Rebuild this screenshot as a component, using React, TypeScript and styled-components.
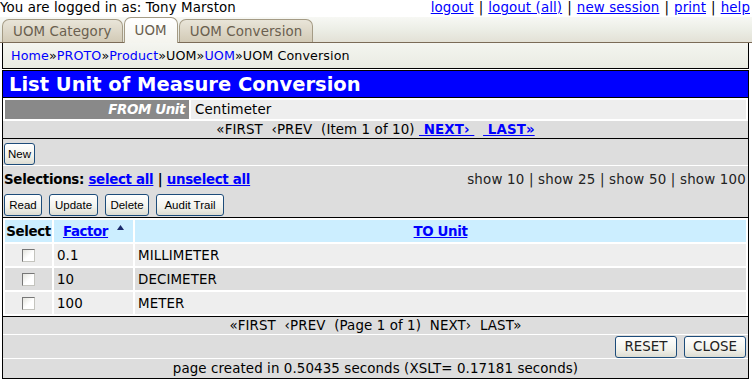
import React from 'react';
import styled, {createGlobalStyle} from 'styled-components';

const GlobalStyle = createGlobalStyle`
  body {
    margin: 0;
    background: #fff;
    font-family: "DejaVu Sans", Verdana, sans-serif;
    font-size: 13.4px;
    letter-spacing: 0.1px;
    color: #000;
  }
  a {
    color: #0000ff;
  }
  th {
    letter-spacing: -0.4px;
  }
`

const TopLine = styled.div`
  display: flex;
  justify-content: space-between;
  height: 17px;
  line-height: 16px;
  padding-right: 2px;
  white-space: pre;
`

const Sep = styled.span`
  padding: 0 5px;
`

const TabBar = styled.div`
  display: flex;
  align-items: flex-end;
  height: 25px;
  padding-left: 2px;
  background: linear-gradient(#f7f8f4, #eceee6 50%, #e3e1d6);
  border-bottom: 1px solid #7b6b57;
`

const Tab = styled.div<{ $active?: boolean }>`
  position: relative;
  display: flex;
  align-items: center;
  height: ${p => p.$active ? 25 : 22}px;
  margin-right: 1px;
  margin-bottom: ${p => p.$active ? -1 : 0}px;
  padding: 0 10px;
  border: 1px solid #a49b85;
  border-bottom: none;
  border-radius: 7px 7px 0 0;
  background: ${p => p.$active
    ? 'linear-gradient(#ffffff, #f4f4ee)'
    : 'linear-gradient(#e9e5d9, #d2cab6)'};
  color: #6a5f4f;
`

const Breadcrumb = styled.div`
  height: 25px;
  margin: 0 3px 0 2px;
  padding-left: 8px;
  display: flex;
  align-items: center;
  border: 1px solid #000;
  border-top: none;
  background: linear-gradient(#f4f5f0, #e9ebe2);
  font-size: 12.7px;
  letter-spacing: 0.1px;

  a {
    text-decoration: none;
  }
`

const Main = styled.div`
  margin: 1px 3px 0 2px;
  border: 1px solid #000;
`

const Title = styled.div`
  height: 26px;
  line-height: 27px;
  padding-left: 6px;
  background: #0000ff;
  color: #fff;
  font-weight: bold;
  font-size: 19.5px;
  letter-spacing: 0;
  border-bottom: 1px solid #000;
  white-space: nowrap;
`

const Grid = styled.table`
  width: 100%;
  border-spacing: 2px;
  font-size: 13.4px;
`

const Label = styled.td`
  width: 180px;
  height: 19px;
  padding: 0 4px 0 0;
  background: #898989;
  color: #fff;
  font-weight: bold;
  font-style: italic;
  letter-spacing: -0.4px;
  text-align: right;
`

const Value = styled.td`
  height: 19px;
  padding: 0 0 0 4px;
  background: #eeeeee;
`

const Pager = styled.div<{ $last?: boolean }>`
  height: 17px;
  line-height: 17px;
  text-align: center;
  background: #dddddd;
  white-space: pre;
  border-bottom: 1px solid ${p => p.$last ? '#000' : '#fff'};

  a {
    font-weight: bold;
  }
`

const Bar = styled.div<{ $h: number; $line?: string; $right?: boolean }>`
  height: ${p => p.$h}px;
  display: flex;
  align-items: center;
  justify-content: ${p => p.$right ? 'flex-end' : 'space-between'};
  gap: 7px;
  padding: 0 2px 0 1px;
  background: #dddddd;
  border-bottom: ${p => p.$line ? `1px solid ${p.$line}` : 'none'};
`

const Group = styled.div`
  display: flex;
  gap: 7px;
  align-items: center;
`

const SmallButton = styled.button<{ $w: number }>`
  width: ${p => p.$w}px;
  height: 22px;
  padding: 0;
  border: 1px solid #1d4c7a;
  border-radius: 3px;
  background: linear-gradient(#ffffff, #f2f2ec 60%, #dcdcd2);
  font-family: "Liberation Sans", Arial, sans-serif;
  font-size: 11.5px;
  letter-spacing: 0;
  color: #000;
`

const BigButton = styled.button`
  width: 62px;
  height: 22px;
  border: 1px solid #1d4c7a;
  border-radius: 3px;
  background: linear-gradient(#ffffff, #f2f2ec 60%, #dcdcd2);
  font-family: "DejaVu Sans", Verdana, sans-serif;
  font-size: 13.4px;
  color: #222;
`

const Selections = styled.div`
  font-weight: bold;
  letter-spacing: -0.3px;
`

const ShowLinks = styled.div`
  color: #222;
  white-space: pre;
  letter-spacing: 0.2px;
`

const Head = styled.th<{ $w?: number }>`
  height: 22px;
  width: ${p => p.$w ? `${p.$w}px` : 'auto'};
  padding: 0;
  background: #cceeff;
  text-align: center;
  white-space: nowrap;
`

const SortArrow = styled.svg`
  vertical-align: 6px;
  margin-left: 9px;
`

const Cell = styled.td<{ $alt?: boolean; $center?: boolean }>`
  height: 22px;
  padding: 0 0 0 3px;
  background: ${p => p.$alt ? '#dddddd' : '#eeeeee'};
  text-align: ${p => p.$center ? 'center' : 'left'};
`

const Check = styled.input`
  appearance: none;
  display: inline-block;
  width: 13px;
  height: 13px;
  margin: 4px 0 0 -3px;
  border: 1px solid;
  border-color: #767676 #c4c4be #c4c4be #767676;
  background: linear-gradient(135deg, #e4e4de, #ffffff 55%);
`

const Footer = styled.div`
  height: 19px;
  line-height: 19px;
  text-align: center;
  background: #dddddd;
`

const rows = [
  {factor: '0.1', unit: 'MILLIMETER'},
  {factor: '10', unit: 'DECIMETER'},
  {factor: '100', unit: 'METER'},
];

export default function App() {
  return (
    <>
      <GlobalStyle/>
      <TopLine>
        <span>You are logged in as: Tony Marston</span>
        <span>
          <a href="#">logout</a><Sep>|</Sep>
          <a href="#">logout (all)</a><Sep>|</Sep>
          <a href="#">new session</a><Sep>|</Sep>
          <a href="#">print</a><Sep>|</Sep>
          <a href="#">help</a>
        </span>
      </TopLine>
      <TabBar>
        <Tab>UOM Category</Tab>
        <Tab $active>UOM</Tab>
        <Tab>UOM Conversion</Tab>
      </TabBar>
      <Breadcrumb>
        <a href="#">Home</a>»<a href="#">PROTO</a>»<a href="#">Product</a>»UOM»<a href="#">UOM</a>»UOM Conversion
      </Breadcrumb>
      <Main>
        <Title>List Unit of Measure Conversion</Title>
        <Grid>
          <tbody>
            <tr>
              <Label>FROM Unit</Label>
              <Value>Centimeter</Value>
            </tr>
          </tbody>
        </Grid>
        <Pager $last>
          {'«FIRST  ‹PREV  (Item 1 of 10) '}<a href="#">{' NEXT› '}</a>{'  '}<a href="#">{' LAST»'}</a>
        </Pager>
        <Bar $h={26} $line="#fff">
          <SmallButton $w={31} style={{marginTop: 4}}>New</SmallButton>
        </Bar>
        <Bar $h={26}>
          <Selections>
            Selections: <a href="#">select all</a> | <a href="#">unselect all</a>
          </Selections>
          <ShowLinks>show 10 | show 25 | show 50 | show 100</ShowLinks>
        </Bar>
        <Bar $h={25} $line="#000">
          <Group>
            <SmallButton $w={38}>Read</SmallButton>
            <SmallButton $w={49}>Update</SmallButton>
            <SmallButton $w={44}>Delete</SmallButton>
            <SmallButton $w={68}>Audit Trail</SmallButton>
          </Group>
        </Bar>
        <Grid>
          <thead>
            <tr>
              <Head $w={47}>Select</Head>
              <Head $w={79}>
                <a href="#">Factor</a>
                <SortArrow width="7" height="5" viewBox="0 0 7 5">
                  <path d="M3.5 0 L7 5 L0 5 Z" fill="#1a2a6c"/>
                </SortArrow>
              </Head>
              <Head><a href="#">TO Unit</a></Head>
            </tr>
          </thead>
          <tbody>
            {rows.map((r, i) => (
              <tr key={r.factor}>
                <Cell $alt={i === 1} $center><Check type="checkbox"/></Cell>
                <Cell $alt={i === 1}>{r.factor}</Cell>
                <Cell $alt={i === 1}>{r.unit}</Cell>
              </tr>
            ))}
          </tbody>
        </Grid>
        <div style={{borderTop: '1px solid #000'}}>
          <Pager>{'«FIRST  ‹PREV  (Page 1 of 1)  NEXT›  LAST»'}</Pager>
          <Bar $h={23} $line="#fff" $right>
            <BigButton>RESET</BigButton>
            <BigButton>CLOSE</BigButton>
          </Bar>
          <Footer>page created in 0.50435 seconds (XSLT= 0.17181 seconds)</Footer>
        </div>
      </Main>
    </>
  );
}
